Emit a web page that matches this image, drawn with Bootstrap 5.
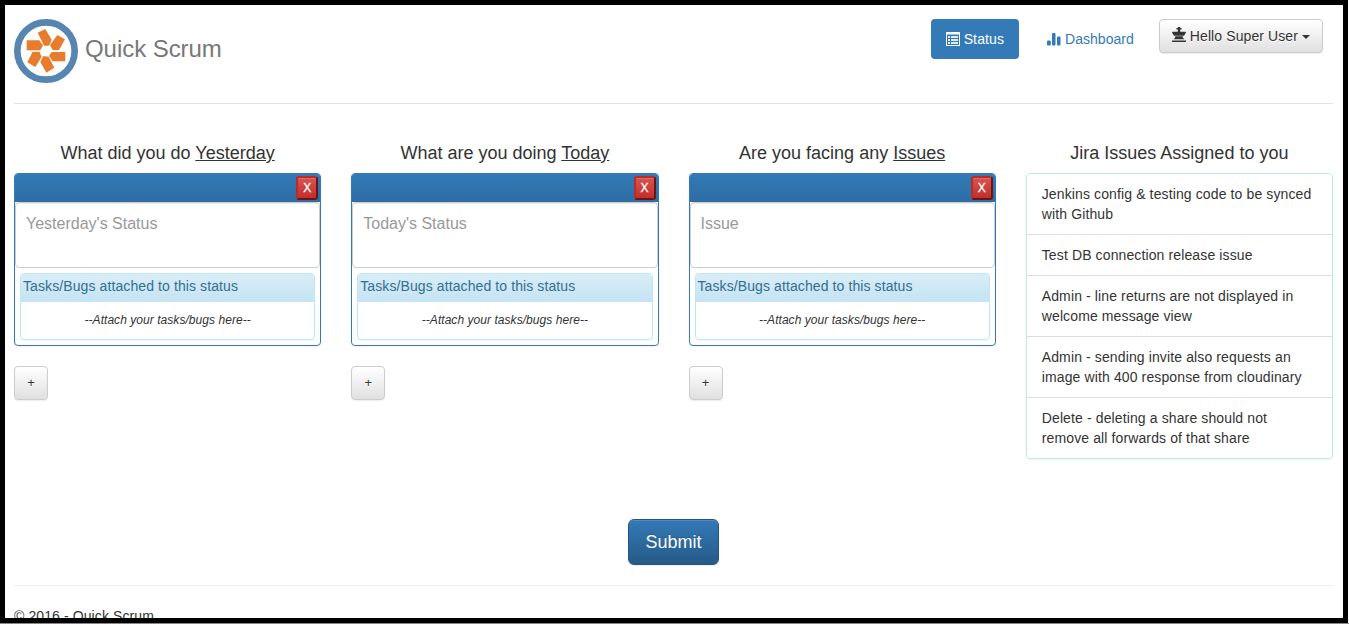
<!DOCTYPE html>
<html lang="en">
<head>
<meta charset="utf-8">
<meta name="viewport" content="width=device-width, initial-scale=1">
<title>Quick Scrum</title>
<link rel="stylesheet" href="https://cdn.jsdelivr.net/npm/bootstrap@5.3.0/dist/css/bootstrap.min.css">
<style>
  :root { --blue: #337ab7; }
  html, body { height: 100%; overflow: hidden; }
  body { font: 14px/20px "Liberation Sans", Arial, sans-serif; letter-spacing: .1px; color: #333; background: #fff; border-bottom: 1px solid #888; }
  .app-frame { width: 1348px; height: 623px; border: 5px solid #000; padding: 14px 10px 0 9px; }
  .app-header { height: 85px; border-bottom: 1px solid #e3e3e3; }
  .brand-name { font-size: 24px; line-height: 24px; letter-spacing: -.05px; color: #777; margin: 18px 0 0 7px; }
  .app-nav .nav-link { font-size: 14px; line-height: 20px; padding: 10px 15px; border-radius: 4px; color: var(--blue); letter-spacing: .03px; }
  .app-nav .nav-link.active { background: var(--blue); color: #fff; margin-right: 13px; letter-spacing: .13px; }
  .glyph { width: 14px; height: 14px; display: inline-block; vertical-align: -2px; }
  .glyph-king { height: 15px; vertical-align: -1px; margin-top: -2px; }
  .btn-soft { font-size: 14px; line-height: 20px; letter-spacing: .1px; padding: 6px 12px; border: 1px solid #ccc; border-radius: 4px; color: #333;
    background: linear-gradient(#fff, #e0e0e0); text-shadow: 0 1px 0 #fff;
    box-shadow: inset 0 1px 0 rgba(255,255,255,.15), 0 1px 1px rgba(0,0,0,.075); }
  .user-btn { height: 34px; margin: 0 10px 0 10px; }
  .caret { display: inline-block; vertical-align: middle; border-top: 4px solid; border-left: 4px solid transparent; border-right: 4px solid transparent; }
  .board { --bs-gutter-x: 30px; padding-top: 39px; height: 415px; }
  .col-title { font-size: 18px; line-height: 20px; letter-spacing: 0; margin: 0 0 10px; text-align: center; }
  .status-card { height: 173px; border: 1px solid var(--blue); border-radius: 4px; box-shadow: 0 1px 2px rgba(0,0,0,.05); }
  .status-head { height: 28px; padding: 2px; background: linear-gradient(var(--blue), #2e6da4); border-radius: 3px 3px 0 0; }
  .close-x { width: 22px; height: 24px; padding: 0; border: 2px solid; border-color: #b92c28 #6b1513 #6b1513 #b92c28; border-radius: 3px;
    background: linear-gradient(#d9534f, #c12e2a); color: #fff; font-size: 12px; line-height: 18px; letter-spacing: 0; -webkit-text-stroke: .3px #fff; box-shadow: inset 0 1px 0 rgba(255,255,255,.15); }
  .status-input { display: block; height: 66px; resize: none; padding: 10px; border: 1px solid #ccc; border-radius: 4px; font-size: 16px; line-height: 22px; letter-spacing: 0;
    box-shadow: inset 0 1px 1px rgba(0,0,0,.075); overflow: hidden; }
  .status-input::placeholder { color: #999; }
  .attach-box { margin: 5px; height: 67px; border: 1px solid #bce8f1; border-radius: 4px; box-shadow: 0 1px 2px rgba(0,0,0,.05); }
  .attach-head { height: 28px; padding: 2px 2px; color: #31708f; background: linear-gradient(#d9edf7, #c4e3f3); border-radius: 3px 3px 0 0; }
  .attach-note { font-size: 12px; line-height: 17px; letter-spacing: .05px; margin: 10px 0 0; font-style: italic; text-align: center; }
  .add-btn { width: 34px; height: 34px; padding: 0; margin-top: 20px; font-size: 13px; }
  .jira-list { border: 1px solid #bce8f1; border-radius: 4px; box-shadow: 0 1px 2px rgba(0,0,0,.05); letter-spacing: .12px; }
  .jira-list .list-group-item { padding: 10px 20px 10px 15px; border-width: 0 0 1px; border-color: #ddd; color: #333; }
  .jira-list .list-group-item:last-child { border-bottom: 0; }
  .submit-btn { width: 91px; height: 46px; padding: 0; border: 1px solid #245580; border-radius: 6px; font-size: 18px; line-height: 24px; letter-spacing: 0; color: #fff;
    background: linear-gradient(#337ab7, #265a88); text-shadow: 0 -1px 0 rgba(0,0,0,.2); box-shadow: inset 0 1px 0 rgba(255,255,255,.15), 0 1px 1px rgba(0,0,0,.075); }
  .app-footer { margin-top: 20px; padding-top: 20px; border-top: 1px solid #eee; }
</style>
</head>
<body>
<div class="app-frame overflow-hidden">
  <header class="app-header d-flex align-items-start justify-content-between">
    <div class="d-flex align-items-start">
      <svg width="64" height="64" viewBox="42 57 192 192" aria-label="Quick Scrum logo">
        <circle cx="138" cy="153" r="86" fill="#fff" stroke="#5585b0" stroke-width="20"/>
        <g fill="#e97c2c">
          <path d="M113 98 136 87 155 119 147 137 132 137Z"/>
          <path d="M172 105 195 118 177 150 158 150 150 135Z"/>
          <path d="M196 156V184H158L147 168 155 156Z"/>
          <path d="M130 168 146 170 163 203 139 218 121 186Z"/>
          <path d="M98 155H118L125 170 106 201 82 187Z"/>
          <path d="M80 121H118L129 136 121 151H80Z"/>
        </g>
      </svg>
      <div class="brand-name">Quick Scrum</div>
    </div>
    <nav class="app-nav d-flex align-items-start">
      <a class="nav-link active" href="#"><svg class="glyph" viewBox="0 0 14 14"><path fill="#fff" fill-rule="evenodd" d="M.5 0H13.500L14 .5V13.500L13.500 14H.5L0 13.500V.5ZM1 2.500V13H13V2.500Z"/><path fill="#fff" fill-opacity=".85" d="M2 4H4V6H2ZM5 4H12V6H5ZM2 7H4V9H2ZM5 7H12V9H5ZM2 10H4V12H2ZM5 10H12V12H5Z"/></svg> Status</a>
      <a class="nav-link" href="#"><svg class="glyph" viewBox="0 0 14 14"><g fill="#337ab7"><rect x="0" y="8.500" width="3.800" height="5" rx="1"/><rect x="5" y="1" width="3.500" height="12.500" rx="1"/><rect x="10" y="4.500" width="3.500" height="9" rx="1"/></g></svg> Dashboard</a>
      <button class="btn btn-soft user-btn" type="button"><svg class="glyph glyph-king" viewBox="0 0 14 15"><path fill="#333" d="M6 0H8L8.300 1H9.500V2.500H8.300L8 4.200 9 4.700H13.500L14 5.500 12 8.700H2L0 5.500 .5 4.700H5L6 4.200 5.700 2.500H4.500V1H5.700ZM3.300 9.300H10.700L11 11 12.500 12.200H1.500L3 11ZM0 13.500H14V15H0Z"/></svg> Hello Super User <span class="caret"></span></button>
    </nav>
  </header>

  <main class="row board align-items-start">
    <section class="col-3">
      <h4 class="col-title">What did you do <u>Yesterday</u></h4>
      <div class="status-card">
        <div class="status-head d-flex justify-content-end"><button class="close-x" type="button">X</button></div>
        <textarea class="status-input w-100" placeholder="Yesterday's Status"></textarea>
        <div class="attach-box"><div class="attach-head">Tasks/Bugs attached to this status</div><p class="attach-note">--Attach your tasks/bugs here--</p></div>
      </div>
      <button class="btn btn-soft add-btn" type="button">+</button>
    </section>
    <section class="col-3">
      <h4 class="col-title">What are you doing <u>Today</u></h4>
      <div class="status-card">
        <div class="status-head d-flex justify-content-end"><button class="close-x" type="button">X</button></div>
        <textarea class="status-input w-100" placeholder="Today's Status"></textarea>
        <div class="attach-box"><div class="attach-head">Tasks/Bugs attached to this status</div><p class="attach-note">--Attach your tasks/bugs here--</p></div>
      </div>
      <button class="btn btn-soft add-btn" type="button">+</button>
    </section>
    <section class="col-3">
      <h4 class="col-title">Are you facing any <u>Issues</u></h4>
      <div class="status-card">
        <div class="status-head d-flex justify-content-end"><button class="close-x" type="button">X</button></div>
        <textarea class="status-input w-100" placeholder="Issue"></textarea>
        <div class="attach-box"><div class="attach-head">Tasks/Bugs attached to this status</div><p class="attach-note">--Attach your tasks/bugs here--</p></div>
      </div>
      <button class="btn btn-soft add-btn" type="button">+</button>
    </section>
    <section class="col-3">
      <h4 class="col-title">Jira Issues Assigned to you</h4>
      <ul class="list-group jira-list">
        <li class="list-group-item">Jenkins config &amp; testing code to be synced with Github</li>
        <li class="list-group-item">Test DB connection release issue</li>
        <li class="list-group-item">Admin - line returns are not displayed in welcome message view</li>
        <li class="list-group-item">Admin - sending invite also requests an image with 400 response from cloudinary</li>
        <li class="list-group-item">Delete - deleting a share should not remove all forwards of that share</li>
      </ul>
    </section>
  </main>

  <div class="d-flex justify-content-center"><button class="btn submit-btn" type="submit">Submit</button></div>
  <footer class="app-footer">© 2016 - Quick Scrum</footer>
</div>
<script src="https://cdn.jsdelivr.net/npm/bootstrap@5.3.0/dist/js/bootstrap.bundle.min.js"></script>
</body>
</html>
